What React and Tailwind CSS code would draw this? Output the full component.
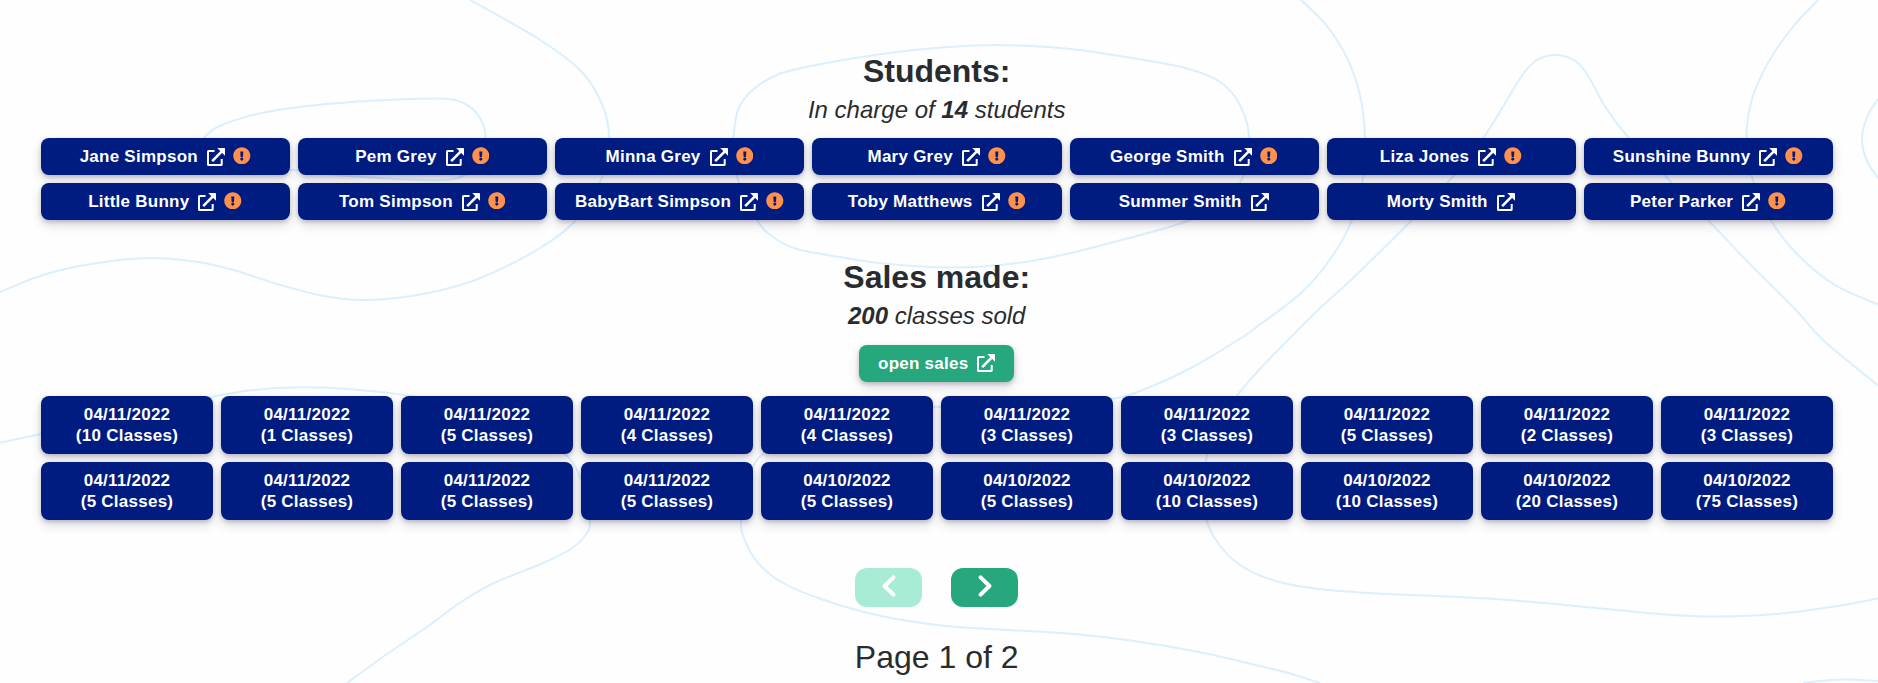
import { FaExclamationCircle } from "react-icons/fa";

const students = [
  ["Jane Simpson", true],
  ["Pem Grey", true],
  ["Minna Grey", true],
  ["Mary Grey", true],
  ["George Smith", true],
  ["Liza Jones", true],
  ["Sunshine Bunny", true],
  ["Little Bunny", true],
  ["Tom Simpson", true],
  ["BabyBart Simpson", true],
  ["Toby Matthews", true],
  ["Summer Smith", false],
  ["Morty Smith", false],
  ["Peter Parker", true],
];

const sales = [
  ["04/11/2022", 10],
  ["04/11/2022", 1],
  ["04/11/2022", 5],
  ["04/11/2022", 4],
  ["04/11/2022", 4],
  ["04/11/2022", 3],
  ["04/11/2022", 3],
  ["04/11/2022", 5],
  ["04/11/2022", 2],
  ["04/11/2022", 3],
  ["04/11/2022", 5],
  ["04/11/2022", 5],
  ["04/11/2022", 5],
  ["04/11/2022", 5],
  ["04/10/2022", 5],
  ["04/10/2022", 5],
  ["04/10/2022", 10],
  ["04/10/2022", 10],
  ["04/10/2022", 20],
  ["04/10/2022", 75],
];

// Points of the background contour lines, joined by smooth curves.
const contours = [
  [[470, 0], [537, 38], [581, 71], [602, 104], [609, 137], [603, 175], [578, 218], [540, 248], [478, 279], [423, 294], [366, 300], [324, 296], [277, 284], [237, 271], [198, 262], [148, 258], [85, 265], [40, 276], [0, 292]],
  [[202, 140], [217.5, 127], [257, 114], [308, 106], [376, 100.5], [443, 98.7], [467, 105], [480.5, 119], [485.6, 137], [479, 165], [463, 176], [443, 180], [395, 179], [336, 175], [293, 170], [225, 160], [202, 140]],
  [[733.5, 137], [738, 110], [752.6, 90], [779, 74], [816, 65], [865, 56.5], [930, 48.5], [997.5, 45], [1065, 48.5], [1126, 57], [1187, 68.5], [1220, 82], [1240, 105], [1249, 140], [1238, 186], [1195, 218], [1110, 243], [1048, 258], [1000, 265], [951, 267.5], [889, 264], [840, 257], [797, 249], [773, 237], [757, 220], [738, 180], [733.5, 137]],
  [[1301, 0], [1327, 26], [1347, 58], [1360, 95], [1365, 137], [1363, 178], [1352, 220], [1331, 258], [1301, 293], [1258, 326], [1238, 340], [1191, 368], [1150, 387], [1112, 399], [1030, 407], [936, 407], [830, 420], [768, 450], [750, 475], [741, 520], [746, 543], [759, 564], [783, 583], [824, 600], [881, 616], [946, 626], [1008, 630], [1069, 633.5], [1134, 641], [1199, 652], [1260, 666], [1290, 673.5], [1320, 683]],
  [[1818, 0], [1792, 28], [1768, 63], [1752, 99], [1746.5, 137], [1752, 177], [1772, 222], [1800, 257], [1835, 285], [1878, 304.5]],
  [[1878, 99], [1867, 117], [1862, 140], [1867, 161], [1878, 178]],
  [[1878, 385.5], [1823, 340], [1796, 310], [1748, 262], [1708, 220], [1671, 182], [1628, 137], [1606, 108], [1587, 74], [1574, 60], [1555, 55], [1537, 60], [1523, 74], [1507, 100], [1484, 137], [1448, 182], [1411, 221], [1353, 278], [1317, 311], [1288, 340], [1258, 371], [1236, 397], [1216, 426], [1207, 455], [1203, 488], [1206.5, 520], [1218, 543], [1236, 562], [1260, 575.5], [1290, 584.5], [1329, 590], [1377, 593.5], [1495, 599], [1606, 609], [1673, 615], [1720, 616.5], [1776, 614], [1831, 607], [1878, 598.5]],
  [[0, 442.7], [41, 434], [130, 415], [211, 397], [253, 390], [300, 387.3], [348, 389], [411, 396], [500, 414], [561, 451], [580, 477], [590, 520], [584, 537], [569, 550], [542, 563.5], [494, 583], [461, 602], [427, 627], [387, 654], [347, 683]],
  [[1803, 683], [1825, 680.5], [1847, 679.5], [1878, 681]],
];

function smoothPath(points) {
  let d = `M${points[0][0]} ${points[0][1]}`;
  for (let i = 0; i < points.length - 1; i++) {
    const a = points[Math.max(i - 1, 0)];
    const b = points[i];
    const c = points[i + 1];
    const e = points[Math.min(i + 2, points.length - 1)];
    d += `C${b[0] + (c[0] - a[0]) / 6} ${b[1] + (c[1] - a[1]) / 6} ${c[0] - (e[0] - b[0]) / 6} ${c[1] - (e[1] - b[1]) / 6} ${c[0]} ${c[1]}`;
  }
  return d;
}

const buttonBase =
  "rounded-lg text-[17px] leading-[21px] font-bold tracking-[0.25px] text-white shadow-[0_2px_4px_rgba(15,5,45,0.2),0_5px_12px_rgba(15,5,45,0.14)]";

function Contours() {
  return (
    <svg
      className="absolute inset-0 -z-10"
      width="1878"
      height="683"
      fill="none"
      stroke="#daf0ff"
      strokeWidth="2"
      aria-hidden="true"
    >
      {contours.map((points, i) => (
        <path key={i} d={smoothPath(points)} />
      ))}
    </svg>
  );
}

function LinkIcon({ className }) {
  return (
    <svg
      className={`ml-[9px] size-[18px] ${className}`}
      viewBox="0 0 18 18"
      fill="none"
      stroke="currentColor"
      aria-hidden="true"
    >
      <path d="M7.5 3H1.6a.6.6 0 0 0-.6.6v12.8a.6.6 0 0 0 .6.6h12.5a.6.6 0 0 0 .6-.6V11" strokeWidth="2" />
      <path d="M5.2 13.2 14.6 3.6" strokeWidth="2.6" />
      <path d="M10.2 0H17.3a.7.7 0 0 1 .7.7V7.8Z" fill="currentColor" stroke="none" />
    </svg>
  );
}

function Chevron({ d }) {
  return (
    <svg
      className="mb-[3px] h-[22px] w-[14px]"
      viewBox="0 0 14 22"
      fill="none"
      stroke="currentColor"
      strokeWidth="4"
      strokeLinecap="round"
      strokeLinejoin="round"
      aria-hidden="true"
    >
      <path d={d} />
    </svg>
  );
}

function StudentButton({ name, alert }) {
  return (
    <button className={`${buttonBase} flex h-[37px] items-center justify-center bg-[#001c80] pr-px`}>
      <span>{name}</span>
      <LinkIcon className="mt-px" />
      {alert && <FaExclamationCircle className="mb-[2px] ml-[8px] size-[17.6px] text-[#ff914d]" />}
    </button>
  );
}

export default function App() {
  return (
    <main className="relative isolate flex h-[683px] flex-col items-center overflow-hidden bg-[#fefefe] pr-[45.6px] pl-[41px] font-['Liberation_Sans',Arial,sans-serif] text-[#292c2f]">
      <Contours />
      <h2 className="mt-[50px] text-[32px] leading-[42px] font-bold">Students:</h2>
      <p className="mt-[2px] text-2xl leading-[31px] italic">
        In charge of <b>14</b> students
      </p>
      <section className="mt-[13px] grid w-[1792px] grid-cols-7 gap-2 self-start">
        {students.map(([name, alert]) => (
          <StudentButton key={name} name={name} alert={alert} />
        ))}
      </section>

      <h2 className="mt-[36px] text-[32px] leading-[42px] font-bold">Sales made:</h2>
      <p className="mt-[2px] text-2xl leading-[31px] italic">
        <b>200</b> classes sold
      </p>
      <button
        className={`${buttonBase} mt-[14px] flex h-[37px] w-[155px] items-center justify-center bg-[#26a77d]`}
      >
        <span>open sales</span>
        <LinkIcon className="mb-[2px]" />
      </button>
      <section className="mt-[14px] grid w-[1792px] grid-cols-10 gap-2 self-start">
        {sales.map(([date, count], i) => (
          <button key={i} className={`${buttonBase} h-[58px] bg-[#001c80] text-center`}>
            {date}
            <br />({count} Classes)
          </button>
        ))}
      </section>

      <nav className="mt-12 flex gap-[29px] text-white">
        <button className="flex h-[39px] w-[67px] items-center justify-center rounded-xl bg-[#a9ecd5]">
          <Chevron d="M11.4 2.3 2.6 11l8.8 8.7" />
        </button>
        <button className="flex h-[39px] w-[67px] items-center justify-center rounded-xl bg-[#26a77d]">
          <Chevron d="m2.6 2.3 8.8 8.7-8.8 8.7" />
        </button>
      </nav>
      <p className="mt-[29px] text-[32px] leading-[42px]">Page 1 of 2</p>
    </main>
  );
}
